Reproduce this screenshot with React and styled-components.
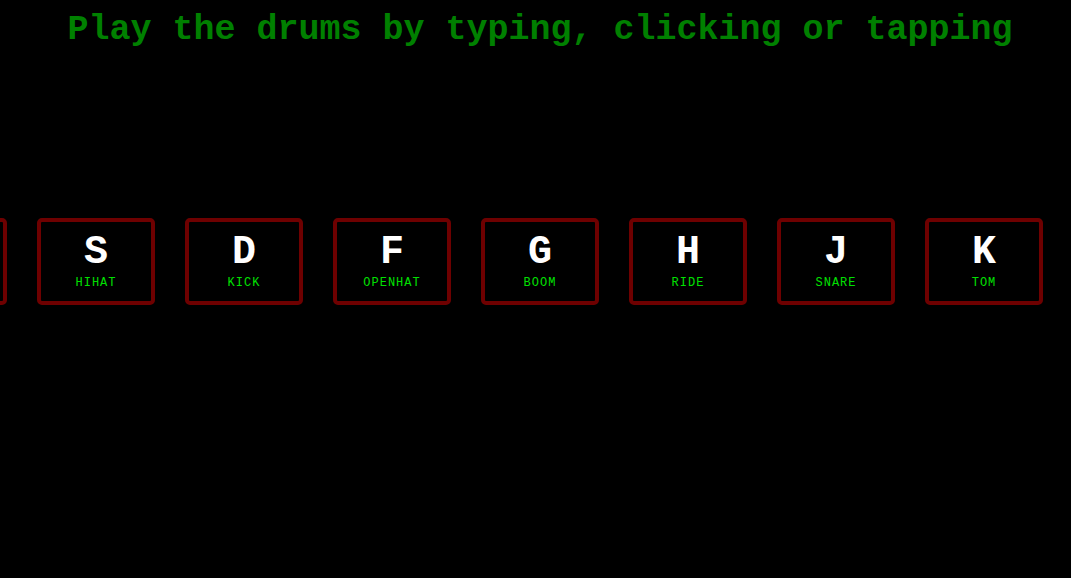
import React from 'react'
import styled, { createGlobalStyle } from 'styled-components'

const GlobalStyle = createGlobalStyle`
    html, body {
        margin: 0;
        padding: 0;
        background: #000;
        overflow: hidden;
    }
    body {
        font-family: "Courier New", "Liberation Mono", monospace;
    }
`

const Styled = {
    Page: styled.div`
        width: 1080px;
        height: 578px;
        background: #000;
    `,
    Title: styled.h1`
        margin: 10px 0 0;
        font-size: 35px;
        line-height: 40px;
        font-weight: bold;
        color: #008000;
        text-align: center;
        white-space: nowrap;
    `,
    Keys: styled.div`
        display: flex;
        justify-content: center;
        margin-top: 168px;
    `,
    Key: styled.div`
        flex-shrink: 0;
        width: 100px;
        margin: 0 15px;
        padding: 8px 5px 10px;
        border: 4px solid #6e0000;
        border-radius: 5px;
        text-align: center;
        color: #fff;
    `,
    Kbd: styled.kbd`
        display: block;
        font-family: "Courier New", "Liberation Mono", monospace;
        font-size: 40px;
        line-height: 46px;
        font-weight: bold;
    `,
    Sound: styled.span`
        display: block;
        font-size: 12px;
        line-height: 15px;
        letter-spacing: 1px;
        text-transform: uppercase;
        color: #00e000;
    `,
}

const keys = [
    { key: 'A', sound: 'clap' },
    { key: 'S', sound: 'hihat' },
    { key: 'D', sound: 'kick' },
    { key: 'F', sound: 'openhat' },
    { key: 'G', sound: 'boom' },
    { key: 'H', sound: 'ride' },
    { key: 'J', sound: 'snare' },
    { key: 'K', sound: 'tom' },
    { key: 'L', sound: 'tink' },
]

const App = () => {
    return (
        <Styled.Page>
            <GlobalStyle />
            <Styled.Title>Play the drums by typing, clicking or tapping</Styled.Title>
            <Styled.Keys>
                {keys.map(k => (
                    <Styled.Key key={k.key}>
                        <Styled.Kbd>{k.key}</Styled.Kbd>
                        <Styled.Sound>{k.sound}</Styled.Sound>
                    </Styled.Key>
                ))}
            </Styled.Keys>
        </Styled.Page>
    )
}

export default App
